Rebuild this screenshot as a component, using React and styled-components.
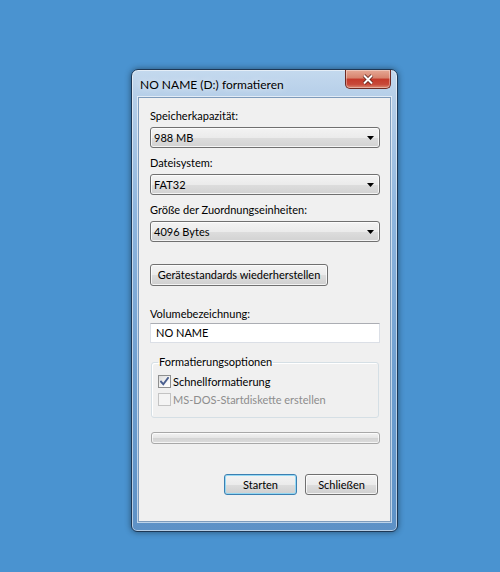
import React from "react";
import styled, { createGlobalStyle } from "styled-components";

const GlobalStyle = createGlobalStyle`
  html, body {
    margin: 0;
    padding: 0;
    background: #4a93d0;
  }
  body {
    font-family: "Segoe UI", Lato, "Liberation Sans", sans-serif;
    font-size: 11px;
    color: #000;
  }
`;

const Desktop = styled.div`
  width: 500px;
  height: 572px;
  box-sizing: border-box;
  padding: 69px 0 0 131px;
  background: #4a93d0;
`;

const Window = styled.div`
  width: 267px;
  height: 463px;
  box-sizing: border-box;
  display: flex;
  flex-direction: column;
  padding: 0 6px 9px 6px;
  border: 1px solid #1d3856;
  border-radius: 7px 7px 6px 6px;
  background: linear-gradient(
    to bottom,
    #c4d9ee 0px,
    #b5cee8 28px,
    #8fb6de 140px,
    #6f9fd0 300px,
    #5d91c6 100%
  );
  box-shadow: 0 0 6px rgba(0, 0, 0, 0.45),
    inset 0 0 0 1px rgba(255, 255, 255, 0.55);
`;

const TitleBar = styled.div`
  height: 27px;
  display: flex;
  align-items: flex-start;
`;

const Title = styled.div`
  padding: 7px 0 0 2px;
  font-size: 12px;
  line-height: 16px;
  color: #000;
  text-shadow: 0 0 6px rgba(255, 255, 255, 0.9);
`;

const CloseButton = styled.div`
  margin-left: auto;
  margin-right: 0;
  width: 46px;
  height: 19px;
  box-sizing: border-box;
  border: 1px solid #6d2a23;
  border-top: none;
  border-radius: 0 0 5px 5px;
  background: linear-gradient(
    to bottom,
    #e6a996 0%,
    #d7826c 45%,
    #c4392a 50%,
    #c8493a 80%,
    #dc8b74 100%
  );
  box-shadow: inset 0 0 0 1px rgba(255, 255, 255, 0.35);
  display: flex;
  align-items: center;
  justify-content: center;
`;

const Client = styled.div`
  flex: 1;
  display: flex;
  flex-direction: column;
  padding: 10px 10px 0 11px;
  background: #f0f0f0;
  border: 1px solid #7e9bbb;
  box-shadow: 0 0 0 1px rgba(255, 255, 255, 0.6);
`;

const Label = styled.div`
  line-height: 16px;
  margin-top: ${(p) => p.$gap || 0}px;
  white-space: nowrap;
  color: ${(p) => (p.$disabled ? "#8d8d8d" : "#000")};
`;

const Combo = styled.div`
  margin-top: 3px;
  width: 230px;
  height: 21px;
  box-sizing: border-box;
  display: flex;
  align-items: center;
  padding: 0 5px 0 3px;
  border: 1px solid #707070;
  border-radius: 3px;
  background: linear-gradient(
    to bottom,
    #f3f3f3 0%,
    #ebebeb 50%,
    #dddddd 51%,
    #d2d2d2 100%
  );
  box-shadow: inset 0 0 0 1px rgba(255, 255, 255, 0.75);
`;

const ComboText = styled.span`
  flex: 1;
  line-height: 16px;
`;

const Button = styled.div`
  margin-top: ${(p) => p.$gap || 0}px;
  width: ${(p) => p.$width}px;
  height: ${(p) => p.$height || 22}px;
  box-sizing: border-box;
  display: flex;
  align-items: center;
  justify-content: center;
  white-space: nowrap;
  border: 1px solid ${(p) => (p.$default ? "#3c7fb1" : "#707070")};
  border-radius: 3px;
  background: linear-gradient(
    to bottom,
    #f3f3f3 0%,
    #ebebeb 50%,
    #dddddd 51%,
    #cfcfcf 100%
  );
  box-shadow: inset 0 0 0 1px
    ${(p) => (p.$default ? "rgba(140, 215, 245, 0.9)" : "rgba(255, 255, 255, 0.75)")};
  line-height: 16px;
`;

const TextInput = styled.div`
  margin-top: 1px;
  width: 230px;
  height: 20px;
  box-sizing: border-box;
  display: flex;
  align-items: center;
  padding-left: 5px;
  background: #fff;
  border: 1px solid #dbdfe6;
  border-top-color: #abadb3;
  line-height: 16px;
`;

const Group = styled.fieldset`
  margin: 11px 0 0 1px;
  width: 228px;
  height: 64px;
  box-sizing: border-box;
  padding: 2px 6px 0 6px;
  border: 1px solid #d5dfe5;
  border-radius: 3px;
  box-shadow: inset 1px 1px 0 #fff;
`;

const Legend = styled.legend`
  padding: 0 1px;
  line-height: 16px;
`;

const CheckRow = styled.div`
  height: 18px;
  display: flex;
  align-items: center;
  gap: 2px;
  white-space: nowrap;
  color: ${(p) => (p.$disabled ? "#8d8d8d" : "#000")};
`;

const Box = styled.div`
  width: 13px;
  height: 13px;
  box-sizing: border-box;
  border: 1px solid ${(p) => (p.$disabled ? "#c3c3c3" : "#8e8f8f")};
  background: ${(p) =>
    p.$disabled
      ? "#f4f4f4"
      : "linear-gradient(135deg, #dcdcdc 0%, #f6f6f6 60%, #ffffff 100%)"};
  display: flex;
  align-items: center;
  justify-content: center;
`;

const Progress = styled.div`
  margin: 14px 0 0 1px;
  width: 229px;
  height: 12px;
  box-sizing: border-box;
  border: 1px solid #a8a8a8;
  border-radius: 3px;
  background: linear-gradient(
    to bottom,
    #f3f3f3 0%,
    #e6e6e6 45%,
    #d4d4d4 55%,
    #dcdcdc 100%
  );
  box-shadow: inset 0 0 0 1px rgba(255, 255, 255, 0.7);
`;

const Actions = styled.div`
  margin-top: 30px;
  width: 228px;
  display: flex;
  justify-content: flex-end;
  gap: 8px;
`;

const Arrow = () => (
  <svg width="7" height="4" viewBox="0 0 7 4">
    <polygon points="0,0 7,0 3.5,4" fill="#000" />
  </svg>
);

const Check = () => (
  <svg width="9" height="9" viewBox="0 0 9 9">
    <path
      d="M1 4.6 L3.3 7.2 L8 1"
      fill="none"
      stroke="#4a5f8f"
      strokeWidth="1.9"
      strokeLinecap="square"
    />
  </svg>
);

const CloseGlyph = () => (
  <svg width="14" height="11" viewBox="0 0 14 11">
    <path d="M3 1.5 L11 9.5 M11 1.5 L3 9.5" stroke="#5a1d16" strokeWidth="3.6" />
    <path d="M3 1.5 L11 9.5 M11 1.5 L3 9.5" stroke="#fff" strokeWidth="2" />
  </svg>
);

const fields = [
  { label: "Speicherkapazität:", value: "988 MB", gap: 0 },
  { label: "Dateisystem:", value: "FAT32", gap: 7 },
  { label: "Größe der Zuordnungseinheiten:", value: "4096 Bytes", gap: 7 },
];

export default function App() {
  return (
    <>
      <GlobalStyle />
      <Desktop>
        <Window>
          <TitleBar>
            <Title>NO NAME (D:) formatieren</Title>
            <CloseButton>
              <CloseGlyph />
            </CloseButton>
          </TitleBar>
          <Client>
            {fields.map((f) => (
              <React.Fragment key={f.label}>
                <Label $gap={f.gap}>{f.label}</Label>
                <Combo>
                  <ComboText>{f.value}</ComboText>
                  <Arrow />
                </Combo>
              </React.Fragment>
            ))}

            <Button $gap={22} $width={178}>
              Gerätestandards wiederherstellen
            </Button>

            <Label $gap={20}>Volumebezeichnung:</Label>
            <TextInput>NO NAME</TextInput>

            <Group>
              <Legend>Formatierungsoptionen</Legend>
              <CheckRow>
                <Box>
                  <Check />
                </Box>
                Schnellformatierung
              </CheckRow>
              <CheckRow $disabled>
                <Box $disabled />
                MS-DOS-Startdiskette erstellen
              </CheckRow>
            </Group>

            <Progress />

            <Actions>
              <Button $width={73} $height={21} $default>
                Starten
              </Button>
              <Button $width={73} $height={21}>
                Schließen
              </Button>
            </Actions>
          </Client>
        </Window>
      </Desktop>
    </>
  );
}
